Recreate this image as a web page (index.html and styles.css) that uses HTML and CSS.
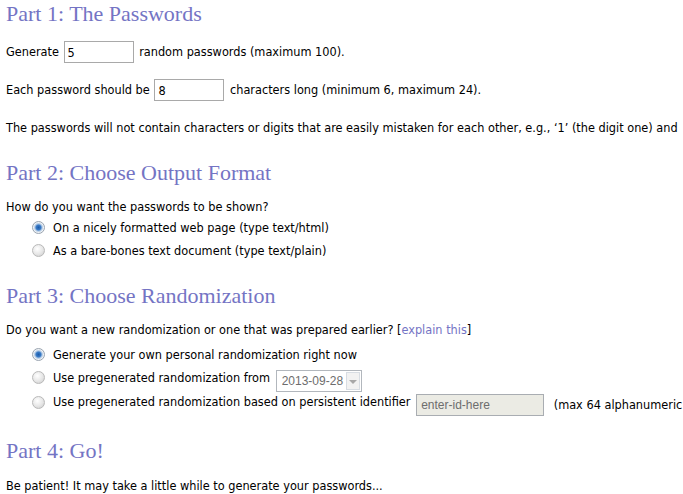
FILE: index.html
```html
<!DOCTYPE html>
<html lang="en">
<head>
    <meta charset="UTF-8">
    <title>Password Generator</title>

    <link rel="stylesheet" href="styles.css">
</head>
<body>
    <form class="wrapper">
        <h2 class="part-title">Part 1: The Passwords</h2>
        <p class="field-row">
            Generate <input type="text" class="text-box" name="count" value="5"> random passwords (maximum 100).
        </p>
        <p class="field-row">
            Each password should be <input type="text" class="text-box" name="length" value="8"> characters long (minimum 6, maximum 24).
        </p>
        <p class="field-row">
            The passwords will not contain characters or digits that are easily mistaken for each other, e.g., ‘1’ (the digit one) and
        </p>

        <h2 class="part-title">Part 2: Choose Output Format</h2>
        <p class="question">How do you want the passwords to be shown?</p>
        <ul class="choice-list">
            <li><label><input type="radio" name="format" value="html" checked><span class="radio-mark"></span>On a nicely formatted web page (type text/html)</label></li>
            <li><label><input type="radio" name="format" value="plain"><span class="radio-mark"></span>As a bare-bones text document (type text/plain)</label></li>
        </ul>

        <h2 class="part-title">Part 3: Choose Randomization</h2>
        <p class="question">Do you want a new randomization or one that was prepared earlier? [<a href="#" class="help-link">explain this</a>]</p>
        <ul class="choice-list choice-list-tall">
            <li><label><input type="radio" name="rnd" value="new" checked><span class="radio-mark"></span>Generate your own personal randomization right now</label></li>
            <li>
                <label><input type="radio" name="rnd" value="date"><span class="radio-mark"></span>Use pregenerated randomization from</label>
                <span class="date-select">
                    <select name="date" disabled>
                        <option>2013-09-28</option>
                    </select>
                    <span class="date-btn"></span>
                </span>
            </li>
            <li class="id-row">
                <label><input type="radio" name="rnd" value="id"><span class="radio-mark"></span>Use pregenerated randomization based on persistent identifier</label>
                <input type="text" class="id-box" name="persistent" value="enter-id-here" disabled>
                (max 64 alphanumeric
            </li>
        </ul>

        <h2 class="part-title part-go">Part 4: Go!</h2>
        <p class="question last-note">Be patient! It may take a little while to generate your passwords...</p>
    </form>
</body>
</html>
```

FILE: styles.css
```css
* {
    margin: 0;
    padding: 0;
}

html {
    overflow: hidden;
}

body {
    font-family: "DejaVu Sans Condensed", "DejaVu Sans", sans-serif;
    font-stretch: condensed;
    font-size: 12.6px;
    color: #000000;
    background: #ffffff;
    white-space: nowrap;
}

.wrapper {
    padding: 0 6px;
}

.part-title {
    font-family: "Liberation Serif", "DejaVu Serif", serif;
    font-weight: normal;
    font-size: 22px;
    line-height: 28px;
    color: #7474c4;
    margin-top: 20px;
}

.wrapper .part-title:first-child {
    margin-top: 0;
}

.field-row {
    height: 22px;
    line-height: 22px;
    margin-top: 16px;
}

.part-title + .field-row {
    margin-top: 13px;
}

.text-box {
    width: 70px;
    height: 22px;
    margin: 0 2px 0 1px;
    padding: 0 3px;
    border: 1px solid #a9a9a9;
    box-sizing: border-box;
    font-family: inherit;
    font-size: 12.6px;
    color: #000000;
    vertical-align: top;
    outline: none;
}

.question {
    height: 18px;
    line-height: 18px;
    margin-top: 11px;
}

.choice-list {
    list-style: none;
    padding-left: 26px;
}

.choice-list li {
    height: 23px;
    line-height: 23px;
}

.choice-list-tall {
    margin-top: 4px;
}

.choice-list .id-row {
    height: 24px;
    line-height: 24px;
    margin-top: 1px;
}

.choice-list label {
    display: inline-flex;
    align-items: center;
}

.choice-list input[type="radio"] {
    display: none;
}

.radio-mark {
    width: 13px;
    height: 13px;
    margin-right: 8px;
    border-radius: 50%;
    box-sizing: border-box;
    border: 1px solid #b9b9b9;
    background: radial-gradient(circle at 40% 35%, #ffffff 0, #e6e6e6 55%, #c8c8c8 100%);
}

input[type="radio"]:checked + .radio-mark {
    background: radial-gradient(circle, #1c5aa8 0, #3a7cc8 2.5px, #a4c0e0 3.5px, #eef2f6 5px);
    border-color: #9aa4b0;
}

.help-link {
    color: #7474c4;
    text-decoration: none;
}

.date-select {
    position: relative;
    display: inline-block;
    margin-left: 2px;
    vertical-align: middle;
    line-height: 0;
}

.date-select select {
    -webkit-appearance: none;
    appearance: none;
    width: 86px;
    height: 22px;
    padding: 0 0 0 5px;
    border: 1px solid #b2b7bd;
    background: #ffffff;
    font-family: "Liberation Sans", Arial, sans-serif;
    font-size: 12px;
    color: #6d6d6d;
    opacity: 1;
}

.date-btn {
    position: absolute;
    top: 2px;
    right: 2px;
    width: 14px;
    height: 18px;
    box-sizing: border-box;
    border: 1px solid #d8dde3;
    background: #f2f2f2;
}

.date-btn::after {
    content: "";
    position: absolute;
    left: 2px;
    top: 7px;
    border-left: 4px solid transparent;
    border-right: 4px solid transparent;
    border-top: 4px solid #a8a8a8;
}

.id-box {
    width: 128px;
    height: 22px;
    margin: 0 6px 0 2px;
    padding: 0 4px;
    border: 1px solid #a9adb2;
    box-sizing: border-box;
    background: #ebebe4;
    font-family: "Liberation Sans", Arial, sans-serif;
    font-size: 12px;
    color: #6d6d6d;
    vertical-align: middle;
}

.part-go {
    margin-top: 23px;
}

.last-note {
    margin-top: 12px;
}
```
